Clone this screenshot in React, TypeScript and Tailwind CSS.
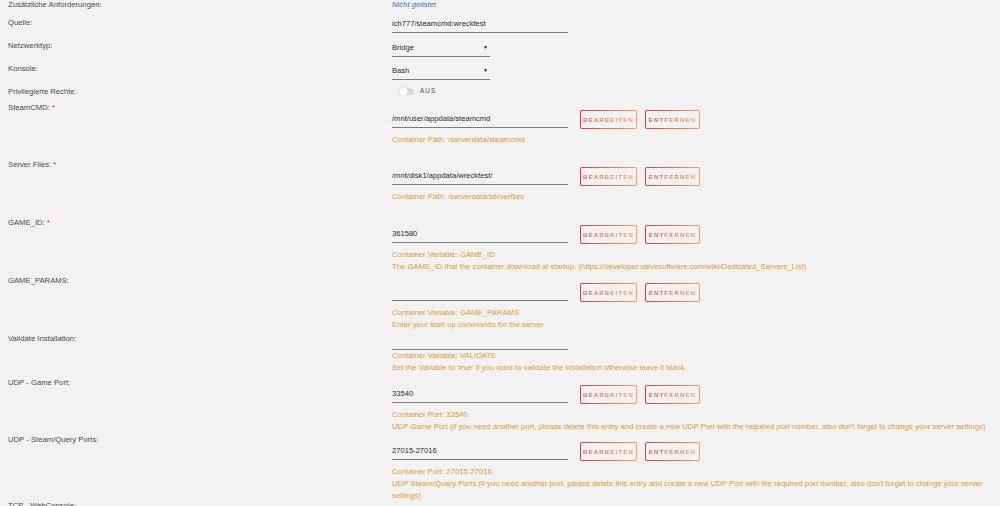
import React from "react";

const FONT = { fontFamily: '"Liberation Sans", Arial, sans-serif' };

function Label({ text, req }: { text: string; req?: boolean }) {
  return (
    <div className="w-[392px] shrink-0 pl-2 text-[7.7px] leading-[12px] text-[#4a4a4a]">
      {text}
      {req && <span className="text-[#e22828]"> *</span>}
    </div>
  );
}

function GradButton({ text, w }: { text: string; w: string }) {
  return (
    <div className={`${w} h-[19px] p-px rounded-[2px] bg-linear-to-r from-[#e0383c] to-[#f7a05a]`}>
      <div className="h-full w-full rounded-[1px] bg-[#f2f2f2] flex items-center justify-center">
        <span className="bg-linear-to-r from-[#e2585a] to-[#f6a05c] bg-clip-text text-transparent text-[6px] font-bold tracking-[1.2px] leading-none">
          {text}
        </span>
      </div>
    </div>
  );
}

function Desc({ lines }: { lines: string[] }) {
  return (
    <div className="text-[7.75px] leading-[12px] text-[#e49b32] pr-[4px]">
      {lines.map((l, i) => (
        <div key={i}>{l}</div>
      ))}
    </div>
  );
}

function PathRow({
  label,
  req,
  value,
  desc,
  h,
}: {
  label: string;
  req?: boolean;
  value: string;
  desc: string[];
  h: string;
}) {
  return (
    <div className={`flex ${h}`}>
      <Label text={label} req={req} />
      <div className="flex-1 min-w-0">
        <div className="pt-2 flex items-start">
          <div className="w-[176px] h-[18px] border-b border-[#7d7d7d] flex items-center text-[7.6px] text-[#2a2a2a]">
            {value}
          </div>
          <div className="ml-3 flex gap-2">
            <GradButton text="BEARBEITEN" w="w-[57px]" />
            <GradButton text="ENTFERNEN" w="w-[55px]" />
          </div>
        </div>
        <div className="mt-[5px]">
          <Desc lines={desc} />
        </div>
      </div>
    </div>
  );
}

function Select({ value }: { value: string }) {
  return (
    <div className="w-[98px] h-[17px] border-b border-[#7d7d7d] flex items-center justify-between pr-[2px] text-[7.6px] text-[#2a2a2a]">
      <span>{value}</span>
      <span className="text-[5px] text-[#222]">▼</span>
    </div>
  );
}

export default function App() {
  return (
    <div className="w-[1000px] h-[506px] overflow-hidden bg-[#f2f2f2]" style={FONT}>
      <div className="-mt-px">
        {/* extra requirements */}
        <div className="flex h-[18px]">
          <Label text="Zusätzliche Anforderungen:" />
          <div className="text-[7.7px] leading-[12px] italic text-[#4a6fb5]">Nicht gelistet</div>
        </div>

        {/* repository */}
        <div className="flex h-[23px]">
          <Label text="Quelle:" />
          <div className="-mt-px w-[176px] h-[17px] border-b border-[#7d7d7d] flex items-center text-[7.6px] text-[#2a2a2a]">
            ich777/steamcmd:wreckfest
          </div>
        </div>

        <div className="flex h-[23px]">
          <Label text="Netzwerktyp:" />
          <Select value="Bridge" />
        </div>

        <div className="flex h-[23px]">
          <Label text="Konsole:" />
          <Select value="Bash" />
        </div>

        <div className="flex h-[16px]">
          <Label text="Privilegierte Rechte:" />
          <div className="flex items-center h-[10px] pl-[7px]">
            <div className="w-[15px] h-[7px] rounded-full bg-[#d9d9d9] relative">
              <div className="absolute left-0 top-[-1px] w-[9px] h-[9px] rounded-full bg-white shadow-[0_0_1px_rgba(0,0,0,0.35)]" />
            </div>
            <span className="ml-[6px] text-[6.5px] tracking-[1px] text-[#555]">AUS</span>
          </div>
        </div>

        <PathRow
          label="SteamCMD:"
          req
          value="/mnt/user/appdata/steamcmd"
          desc={["Container Path: /serverdata/steamcmd"]}
          h="h-[57px]"
        />
        <PathRow
          label="Server Files:"
          req
          value="/mnt/disk1/appdata/wreckfest/"
          desc={["Container Path: /serverdata/serverfiles"]}
          h="h-[58px]"
        />
        <PathRow
          label="GAME_ID:"
          req
          value="361580"
          desc={[
            "Container Variable: GAME_ID",
            "The GAME_ID that the container download at startup. (https://developer.valvesoftware.com/wiki/Dedicated_Servers_List)",
          ]}
          h="h-[58px]"
        />
        <PathRow
          label="GAME_PARAMS:"
          value=""
          desc={["Container Variable: GAME_PARAMS", "Enter your start up commands for the server."]}
          h="h-[58px]"
        />

        {/* validate, no edit buttons */}
        <div className="flex h-[44px]">
          <Label text="Validate Installation:" />
          <div className="flex-1">
            <div className="w-[176px] h-[17px] border-b border-[#7d7d7d]" />
            <Desc
              lines={[
                "Container Variable: VALIDATE",
                "Set the Variable to 'true' if you want to validate the installation otherwise leave it blank.",
              ]}
            />
          </div>
        </div>

        <PathRow
          label="UDP - Game Port:"
          value="33540"
          desc={[
            "Container Port: 33540",
            "UDP Game Port (if you need another port, please delete this entry and create a new UDP Port with the required port number, also don't forget to change your server settings)",
          ]}
          h="h-[57px]"
        />
        <PathRow
          label="UDP - Steam/Query Ports:"
          value="27015-27016"
          desc={[
            "Container Port: 27015-27016",
            "UDP Steam/Query Ports (if you need another port, please delete this entry and create a new UDP Port with the required port number, also don't forget to change your server settings)",
          ]}
          h="h-[66px]"
        />

        <div className="flex h-[20px]">
          <Label text="TCP - WebConsole:" />
        </div>
      </div>
    </div>
  );
}
